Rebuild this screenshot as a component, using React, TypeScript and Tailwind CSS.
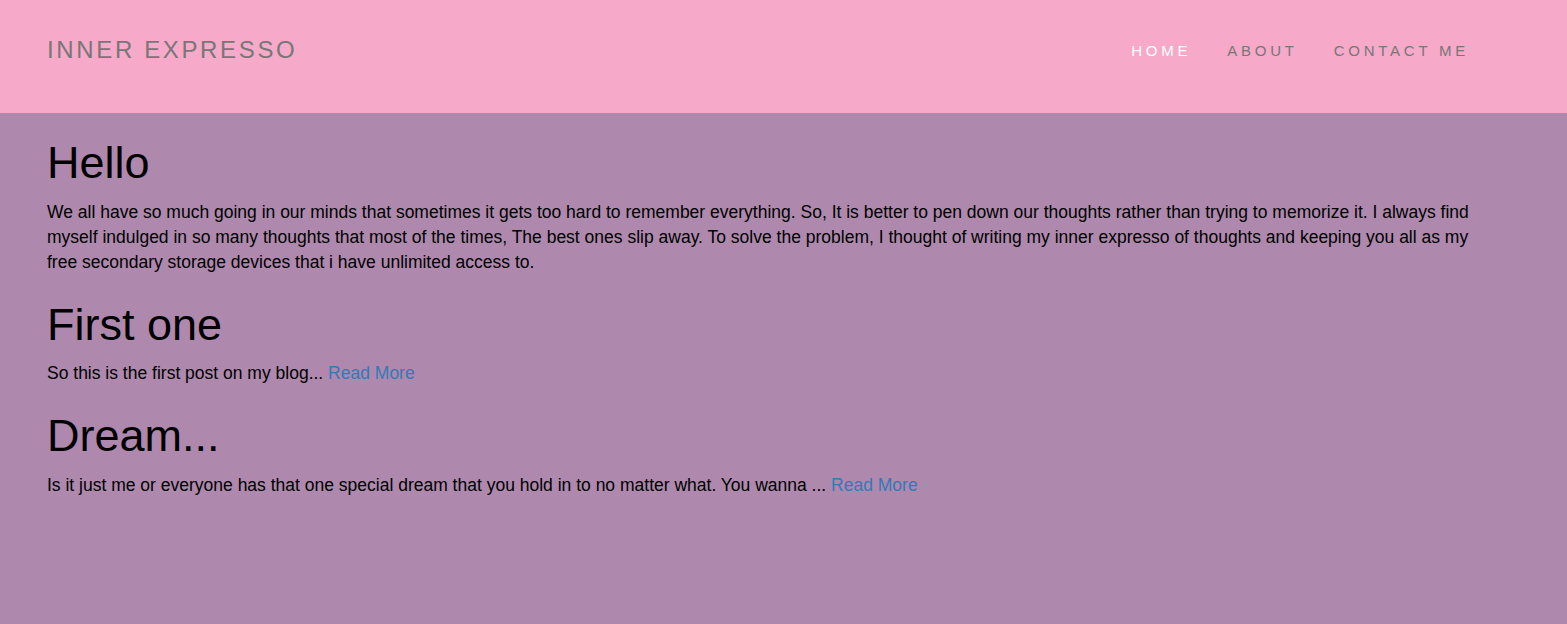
const posts = [
  {
    title: "First one",
    excerpt: "So this is the first post on my blog...",
  },
  {
    title: "Dream...",
    excerpt:
      "Is it just me or everyone has that one special dream that you hold in to no matter what. You wanna ...",
  },
];

const App = () => {
  return (
    <div className="min-h-screen flex flex-col bg-[#ae89ad] font-['Liberation_Sans',Arial,sans-serif]">
      {/* Navbar */}
      <header className="h-[113px] bg-[#f6a9c8] flex items-start justify-between pl-[47px] pr-[80px]">
        <a className="mt-[38px] text-[24px] leading-[24px] tracking-[0.11em] text-[#777]">INNER EXPRESSO</a>
        <nav className="mt-[43px] flex">
          <a className="px-[18px] text-[15px] leading-[15px] tracking-[0.25em] text-white">HOME</a>
          <a className="px-[18px] text-[15px] leading-[15px] tracking-[0.25em] text-[#777]">ABOUT</a>
          <a className="px-[18px] text-[15px] leading-[15px] tracking-[0.25em] text-[#777]">CONTACT ME</a>
        </nav>
      </header>

      {/* Content */}
      <main className="flex-1 pl-[47px] pr-[77px] text-black">
        <h1 className="mt-[25px] mb-[12px] text-[45px] leading-[1.1]">Hello</h1>
        <p className="text-[17.5px] leading-[25px]">
          We all have so much going in our minds that sometimes it gets too hard to remember everything. So, It is
          better to pen down our thoughts rather than trying to memorize it. I always find myself indulged in so many
          thoughts that most of the times, The best ones slip away. To solve the problem, I thought of writing my inner
          expresso of thoughts and keeping you all as my free secondary storage devices that i have unlimited access
          to.
        </p>

        {posts.map((post) => (
          <div key={post.title}>
            <h1 className="mt-[25px] mb-[12px] text-[45px] leading-[1.1]">{post.title}</h1>
            <p className="text-[17.5px] leading-[25px]">
              {post.excerpt} <a className="text-[#337ab7]">Read More</a>
            </p>
          </div>
        ))}
      </main>
    </div>
  );
};

export default App;
